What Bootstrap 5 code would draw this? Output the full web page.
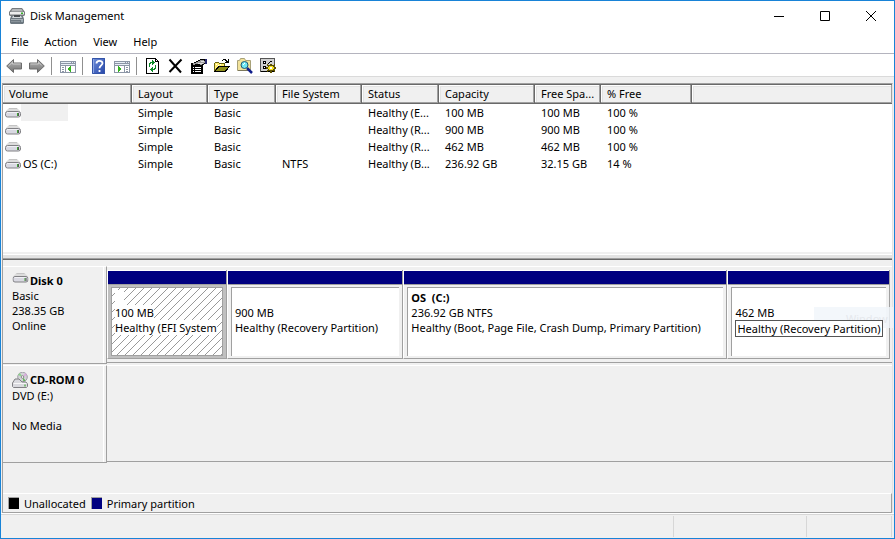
<!DOCTYPE html>
<html lang="en">
<head>
<meta charset="utf-8">
<meta name="viewport" content="width=device-width, initial-scale=1">
<title>Disk Management</title>
<link href="https://cdn.jsdelivr.net/npm/bootstrap@5.3.0/dist/css/bootstrap.min.css" rel="stylesheet">
<style>
  :root { --face:#f0f0f0; --shade:#a0a0a0; --dark:#696969; --light:#e3e3e3; --navy:#000080; }
  body { font-family:"Noto Sans","Open Sans",sans-serif; font-size:11px; line-height:15px; color:#000; }
  .window { min-height:100vh; border:1px solid #1883d7; background:var(--face); }
  .window svg { display:block; flex:none; }
  button { border:0; background:transparent; color:#000; padding:0; }
  .titlebar { height:29px; padding-left:8px; gap:5px; }
  .titlebar h1 { font-size:11px; line-height:15px; }
  .caption-btn { width:46px; height:29px; display:flex; align-items:center; justify-content:center; }
  .menus { height:23px; padding-left:2px; }
  .menus button { padding:0 8px; line-height:23px; }
  .tools { height:24px; border-top:1px solid #b4b4be; border-bottom:1px solid #dadada; padding:1px 0 0 2px; }
  .tools button { width:23px; height:20px; padding-left:3px; }
  .divider { width:1px; height:18px; margin:0 5px 0 2px; background:#909090; }
  .client { margin:6px 1px 0 1px; border:1px solid var(--shade); border-right-color:var(--light); border-bottom-color:var(--light); }
  .volumes { background:#fff; border-top:1px solid var(--dark); min-height:120px; overflow:hidden; }
  .volumes table { table-layout:fixed; width:100%; border-collapse:separate; border-spacing:0; }
  .volumes th { height:19px; padding:0 6px 1px; line-height:15px; font-weight:400; background:var(--face); border-right:1px solid var(--dark); border-bottom:1px solid var(--dark);
    box-shadow:inset -1px -1px 0 var(--shade), inset 1px 1px 0 #fff, inset 2px 2px 0 var(--light); }
  .volumes th:last-child { border-right:0; }
  .volumes td { height:17px; padding:0 6px; line-height:17px; }
  .volumes th, .volumes td { white-space:nowrap; }
  .volumes td:first-child { padding:0 0 0 2px; }
  .volname { padding:0 2px; min-height:17px; }
  .volname.chosen { width:47px; background:var(--face); }
  .w-vol { width:129px } .w-lay { width:76px } .w-type { width:68px } .w-fs { width:86px }
  .w-stat { width:77px } .w-cap { width:96px } .w-free { width:66px } .w-pct { width:91px }
  .splitter { height:8px; background:#f0f0f0; border-bottom:1px solid var(--dark); box-shadow:inset 0 -1px 0 var(--shade), inset 0 -4px 0 var(--light), inset 0 -5px 0 #fff; }
  .disks { padding-top:6px; }
  .diskrow { height:98px; }
  .diskrow + .diskrow { margin-top:1px; }
  .disklabel { width:104px; padding:6px 0 0 9px; border-top:1px solid #fff; border-right:1px solid var(--shade); border-bottom:1px solid var(--shade); box-shadow:inset -2px 0 0 var(--face), inset -3px 0 0 #fff; }
  .disklabel b, .part b { font-weight:700; }
  .disklabel svg { margin-right:1px; }
  .blankline { height:15px; }
  .lane { border-top:1px solid #fff; border-bottom:1px solid var(--shade); padding:3px 2px 3px 0; margin-bottom:1px; min-width:0; }
  .part { min-width:0; border-left:1px solid #fff; border-right:1px solid var(--shade); border-bottom:1px solid var(--shade); }
  .p-efi { flex:119 1 0 } .p-rec { flex:176 1 0 } .p-os { flex:325 1 0 } .p-end { flex:162 1 0 }
  .strip { height:15px; background:var(--navy); border-top:1px solid #fff; border-bottom:1px solid var(--shade); }
  .partbody { margin:2px 3px; height:69px; background:#fff; border-left:1px solid var(--shade); border-top:1px solid var(--shade); padding:2px 0 0 3px; white-space:nowrap; position:relative; }
  .p-efi .holder { background:#c0c0c0; }
  .p-efi .partbody { border:1px solid var(--shade); }
  .holder { display:flow-root; height:73px; }
  .hatch { position:absolute; inset:0; }
  .partbody .line { display:block; width:max-content; min-width:9px; height:15px; background:#fff; position:relative; }
  .partbody .outlined { border:1px solid #555; padding:0 1px; height:17px; z-index:2; }
  .ghost { position:absolute; right:-1px; top:47px; width:79px; height:21px; background:#f1f6fb; color:#dfe3e9; padding:4px 0 0 32px; white-space:nowrap; opacity:.8; }
  .legend { height:20px; margin-top:30px; border-top:1px solid #fff; border-right:1px solid var(--shade); border-bottom:1px solid var(--shade); padding-left:5px; gap:5px; }
  .swatch { width:11px; height:12px; border-left:1px solid var(--shade); border-top:1px solid var(--shade); }
  .swatch.primary { background:var(--navy); }
  .statusbar { height:24px; border-top:1px solid #d7d7d7; padding:1px 2px 1px 0; box-shadow:0 -1px 0 #fff; }
  .statusbar div { border-right:1px solid #d7d7d7; }
  .s-mid { width:133px } .s-end { width:85px }
</style>
<script src="https://cdn.jsdelivr.net/npm/bootstrap@5.3.0/dist/js/bootstrap.bundle.min.js"></script>
</head>
<body>
<svg width="0" height="0" class="position-absolute" aria-hidden="true">
  <defs>
    <linearGradient id="metal" x2="0" y2="1"><stop stop-color="#b8b8b8"/><stop offset="1" stop-color="#707070"/></linearGradient>
    <linearGradient id="blue" x2="1" y2="1"><stop stop-color="#7292dc"/><stop offset="1" stop-color="#2444a8"/></linearGradient>
    <symbol id="drive" viewBox="0 0 16 10">
      <path d="M4 0h8l3.500 3.500H.5z" fill="#dcdcdc"/>
      <path d="M4 .5h8" stroke="#c4c4c4"/>
      <rect x=".5" y="3.500" width="15" height="5.500" rx="2" fill="#d9d9e2" stroke="#808084"/>
      <path d="M2 4.500h11" stroke="#f0f0f4"/>
      <path d="M12.500 5v3" stroke="#3fa632"/><path d="M13.500 5v3" stroke="#555"/>
    </symbol>
  </defs>
</svg>

<main class="window d-flex flex-column">
  <header class="bg-white">
    <div class="titlebar d-flex align-items-center">
      <svg width="16" height="16" viewBox="0 0 16 16" aria-hidden="true">
        <path d="M3 0h10l3 4v3l-1 1H1L0 7V4z" fill="#777b7e"/><path d="M3.500 1h9l1.500 2.500H2z" fill="#b5b8ba"/><path d="M1 4h14v2.500H1z" fill="#eceded"/><path d="M12 4.500h2v1.500h-2z" fill="#37b02b"/>
        <path d="M2 8h12l1 3v4l-1 1H2l-1-1v-4z" fill="#6d7880"/><path d="M4 8h8l1 2H3z" fill="#d3d8db"/><path d="M5 7h6v2H5z" fill="#474c50"/><path d="M2 11.500h12" stroke="#a9b2b8"/><path d="M2 13.500h9" stroke="#889299"/><path d="M13 12v2" stroke="#c7d6dd"/>
      </svg>
      <h1 class="m-0 fw-normal flex-grow-1">Disk Management</h1>
      <div class="d-flex">
        <button type="button" class="caption-btn" aria-label="Minimize"><svg width="10" height="10" viewBox="0 0 10 10"><path d="M0 5.500h10" stroke="#000"/></svg></button>
        <button type="button" class="caption-btn" aria-label="Maximize"><svg width="10" height="10" viewBox="0 0 10 10"><path d="M.5.5h9v9h-9z" fill="none" stroke="#000"/></svg></button>
        <button type="button" class="caption-btn" aria-label="Close"><svg width="10" height="10" viewBox="0 0 10 10"><path d="M0 0l10 10M10 0L0 10" stroke="#000"/></svg></button>
      </div>
    </div>
    <nav class="menus d-flex align-items-start" aria-label="Menu bar">
      <button type="button">File</button><button type="button">Action</button><button type="button">View</button><button type="button">Help</button>
    </nav>
    <div class="tools d-flex align-items-center" role="toolbar" aria-label="Tools">
      <button type="button" aria-label="Back"><svg width="16" height="16" viewBox="0 0 16 16"><path d="M.7 8l6.800-6.500V5h8v6h-8v3.500z" fill="url(#metal)" stroke="#6c6c6c"/><path d="M2.500 8l4-3.700V6h8" fill="none" stroke="#c8c8c8"/></svg></button>
      <button type="button" aria-label="Forward"><svg width="16" height="16" viewBox="0 0 16 16"><path d="M15.300 8L8.500 1.500V5h-8v6h8v3.500z" fill="url(#metal)" stroke="#6c6c6c"/><path d="M1.500 6h8V4.300l3 2.900" fill="none" stroke="#c8c8c8"/></svg></button>
      <span class="divider"></span>
      <button type="button" aria-label="Show or hide console tree"><svg width="16" height="16" viewBox="0 0 16 16" shape-rendering="crispEdges"><path d="M0 3h16v12H0z" fill="#8c96a6"/><path d="M1 4h10v1H1zM12 4h1v1h-1zM14 4h1v1h-1zM1 6h14v1H1z" fill="#e8eef6"/><path d="M1 8h4v6H1zM6 8h9v6H6z" fill="#fff"/><path d="M2 9h2v1H2zM2 11h2v1H2zM2 13h2v1H2z" fill="#8c96a6"/><path d="M11 8v6h-1v-1H9v-1H8v-2h1V9h1V8z" fill="#34b41f"/></svg></button>
      <span class="divider"></span>
      <button type="button" aria-label="Help topics"><svg width="16" height="16" viewBox="0 0 16 16"><path d="M1 0h13v16H1z" fill="url(#blue)"/><path d="M1 0h2v16H1z" fill="#8ca6e4"/><path d="M1.500.5h12v15h-12z" fill="none" stroke="#3454a8"/><path d="M5.500 5.500c0-3.500 6-3.500 6-.2 0 2-3 2.400-3 5M8.500 12v2" fill="none" stroke="#fff" stroke-width="1.800"/></svg></button>
      <button type="button" aria-label="Show or hide action pane"><svg width="16" height="16" viewBox="0 0 16 16" shape-rendering="crispEdges"><path d="M0 3h16v12H0z" fill="#8c96a6"/><path d="M1 4h10v1H1zM12 4h1v1h-1zM14 4h1v1h-1zM1 6h14v1H1z" fill="#e8eef6"/><path d="M1 8h9v6H1zM11 8h4v6h-4z" fill="#fff"/><path d="M12 9h2v1h-2zM12 11h2v1h-2zM12 13h2v1h-2z" fill="#8c96a6"/><path d="M4 8h1v1h1v1h1v2H6v1H5v1H4z" fill="#34b41f"/></svg></button>
      <span class="divider"></span>
      <button type="button" aria-label="Refresh"><svg width="16" height="16" viewBox="0 0 16 16" shape-rendering="crispEdges"><path d="M1.500.5h9l3 3v12h-12z" fill="#fff" stroke="#000"/><path d="M10.500.5v3h3" fill="none" stroke="#000"/><path d="M4 5h1V4h2V2h1v1h1v1h1v1H9v1H8v1H7V5H6v1H5v3H4zM11 7v4h-1v1H8v2H7v-1H6v-1H5v-1h1v-1h1V9h1v2h1v-1h1V7z" fill="#0a8a28"/></svg></button>
      <button type="button" aria-label="Delete"><svg width="16" height="16" viewBox="0 0 16 16"><path d="M1.500 1.500l11.500 13M13.500 1.500L1.500 14" stroke="#000" stroke-width="2"/></svg></button>
      <button type="button" aria-label="Properties"><svg width="16" height="16" viewBox="0 0 16 16" shape-rendering="crispEdges"><path d="M0 5h12v11H0z"/><path d="M2 9h1v1H2zM4 9h6v1H4zM2 11h1v1H2zM4 11h6v1H4zM2 13h1v1H2zM4 13h6v1H4z" fill="#fff"/><path d="M3 5V4h2V3h2V2h2V1h5v1h2v4h-3v1h-1v1H9V7H6V6z" fill="#000"/><path d="M2 5h3V4h2V3h2V2h4v1h1v2h-1v1h-2v1H9V6H4v1H2z" fill="#9c9c9c"/><path d="M7 5h5v1H7zM10 3h3v1h-3z" fill="#dedede"/><path d="M14 1h2v5h-2z" fill="#26266c"/></svg></button>
      <button type="button" aria-label="Open"><svg width="16" height="16" viewBox="0 0 16 16" shape-rendering="crispEdges"><path d="M0 5h1V4h4v1h6v3H4l-3 6H0z" fill="#6a6410"/><path d="M1 5h4v1h5v2H4L1 12z" fill="#ffec6e"/><path d="M2 6h1v1H2zM4 7h1v1H4zM6 6h1v1H6z" fill="#fff"/><path d="M4 8h12l-4 6H0z"/><path d="M5 9h9l-3 4H2z" fill="#8f8f1c"/><path d="M9 1h3v1h1v1h1V1h1v4h-4V4h1V3h-1V2H9v1H8V2h1z"/></svg></button>
      <button type="button" aria-label="Find"><svg width="16" height="16" viewBox="0 0 16 16"><path d="M.5 2.500h2l1-2h4l1 2h5v10H.5z" fill="#f2e29a" stroke="#a8a178"/><path d="M1 12.500h10" stroke="#7c785c"/><path d="M10 10l5 5" stroke="#101e8c" stroke-width="2.500"/><circle cx="7.500" cy="7" r="3.500" fill="#6fe8f4" stroke="#1f5878"/><path d="M6 7l2-2" stroke="#fff"/></svg></button>
      <button type="button" aria-label="Settings"><svg width="16" height="16" viewBox="0 0 16 16" shape-rendering="crispEdges"><path d="M.5.5h14v13H.5z" fill="#d0d0d0" stroke="#555"/><path d="M1 13.500h13" stroke="#000"/><path d="M3.500 3.500h2v2h-2zM3.500 8.500h2v2h-2z" fill="#fff" stroke="#000"/><path d="M8 5h1v1H8zM9 4h1v1H9zM10 3h2v1h-2z"/><path d="M10 6h2v1h2V6h1v2h-1v1h2v2h-2v1h1v2h-1v-1h-2v2h-2v-2H8v1H7v-2h1v-1H6V9h2V8H7V6h1v1h2z" fill="#5d5100"/><path d="M9 8h4v1h1v2h-1v1H9v-1H8V9h1z" fill="#f4df22"/><path d="M10 9h2v2h-2z" fill="#fff"/></svg></button>
    </div>
  </header>

  <div class="client d-flex flex-column flex-grow-1">
    <section class="volumes flex-grow-1" aria-label="Volumes">
      <table>
        <colgroup><col class="w-vol"><col class="w-lay"><col class="w-type"><col class="w-fs"><col class="w-stat"><col class="w-cap"><col class="w-free"><col class="w-pct"><col></colgroup>
        <thead><tr><th>Volume</th><th>Layout</th><th>Type</th><th>File System</th><th>Status</th><th>Capacity</th><th>Free Spa...</th><th>% Free</th><th></th></tr></thead>
        <tbody>
          <tr><td><div class="d-flex align-items-center"><svg width="16" height="10"><use href="#drive"/></svg><span class="volname chosen"></span></div></td><td>Simple</td><td>Basic</td><td></td><td>Healthy (E...</td><td>100 MB</td><td>100 MB</td><td>100 %</td><td></td></tr>
          <tr><td><div class="d-flex align-items-center"><svg width="16" height="10"><use href="#drive"/></svg><span class="volname"></span></div></td><td>Simple</td><td>Basic</td><td></td><td>Healthy (R...</td><td>900 MB</td><td>900 MB</td><td>100 %</td><td></td></tr>
          <tr><td><div class="d-flex align-items-center"><svg width="16" height="10"><use href="#drive"/></svg><span class="volname"></span></div></td><td>Simple</td><td>Basic</td><td></td><td>Healthy (R...</td><td>462 MB</td><td>462 MB</td><td>100 %</td><td></td></tr>
          <tr><td><div class="d-flex align-items-center"><svg width="16" height="10"><use href="#drive"/></svg><span class="volname">OS (C:)</span></div></td><td>Simple</td><td>Basic</td><td>NTFS</td><td>Healthy (B...</td><td>236.92 GB</td><td>32.15 GB</td><td>14 %</td><td></td></tr>
        </tbody>
      </table>
    </section>
    <div class="splitter"></div>

    <section class="disks position-relative" aria-label="Disks">
      <div class="diskrow d-flex">
        <div class="disklabel flex-shrink-0">
          <div class="d-flex"><svg width="17" height="10" viewBox="0 0 16 10"><use href="#drive" width="16" height="10"/></svg><b>Disk 0</b></div>
          <div>Basic</div><div>238.35 GB</div><div>Online</div>
        </div>
        <div class="lane d-flex flex-grow-1">
          <div class="part p-efi"><div class="strip"></div><div class="holder"><div class="partbody">
            <svg class="hatch" width="100%" height="100%" shape-rendering="crispEdges" aria-hidden="true"><defs><pattern id="diag" width="8" height="8" patternUnits="userSpaceOnUse"><path d="M0 7h1v1H0zM1 6h1v1H1zM2 5h1v1H2zM3 4h1v1H3zM4 3h1v1H4zM5 2h1v1H5zM6 1h1v1H6zM7 0h1v1H7z" fill="#999"/></pattern></defs><rect width="100%" height="100%" fill="url(#diag)"/></svg>
            <span class="line"></span><span class="line">100 MB</span><span class="line">Healthy (EFI System</span></div></div></div>
          <div class="part p-rec"><div class="strip"></div><div class="holder"><div class="partbody"><span class="line"></span><span class="line">900 MB</span><span class="line">Healthy (Recovery Partition)</span></div></div></div>
          <div class="part p-os"><div class="strip"></div><div class="holder"><div class="partbody"><b class="line">OS&nbsp; (C:)</b><span class="line">236.92 GB NTFS</span><span class="line">Healthy (Boot, Page File, Crash Dump, Primary Partition)</span></div></div></div>
          <div class="part p-end"><div class="strip"></div><div class="holder"><div class="partbody"><span class="line"></span><span class="line">462 MB</span><span class="line outlined">Healthy (Recovery Partition)</span></div></div></div>
        </div>
        <div class="ghost" aria-hidden="true">Window</div>
      </div>
      <div class="diskrow d-flex">
        <div class="disklabel flex-shrink-0">
          <div class="d-flex"><svg width="17" height="16" viewBox="0 0 17 16"><circle cx="10.500" cy="5" r="4.800" fill="#d3d3d8" stroke="#a0a0a6"/><path d="M10.500 5L8 1l-2 2z" fill="#8ed68a"/><path d="M10.500 5l3-4 1.500 2z" fill="#d8a8dc"/><path d="M10.500 5l1 4.500 2-1z" fill="#57b84e"/><circle cx="10.500" cy="5" r="1.300" fill="#fff" stroke="#888"/><path d="M3 7h4l3 3h4l1.500 2v2.500l-1 1h-13l-1-1V11z" fill="#d9d9de" stroke="#808084"/><path d="M1.500 11.500h13" stroke="#f7f7f7"/><path d="M13 12.500v2" stroke="#259c19"/></svg><b>CD-ROM 0</b></div>
          <div>DVD (E:)</div><div class="blankline"></div><div>No Media</div>
        </div>
        <div class="lane flex-grow-1"></div>
      </div>
      <div class="legend d-flex align-items-center">
        <span class="swatch bg-black"></span><span>Unallocated</span>
        <span class="swatch primary"></span><span>Primary partition</span>
      </div>
    </section>
  </div>

  <footer class="statusbar d-flex"><div class="flex-grow-1"></div><div class="s-mid"></div><div class="s-end"></div></footer>
</main>
</body>
</html>
